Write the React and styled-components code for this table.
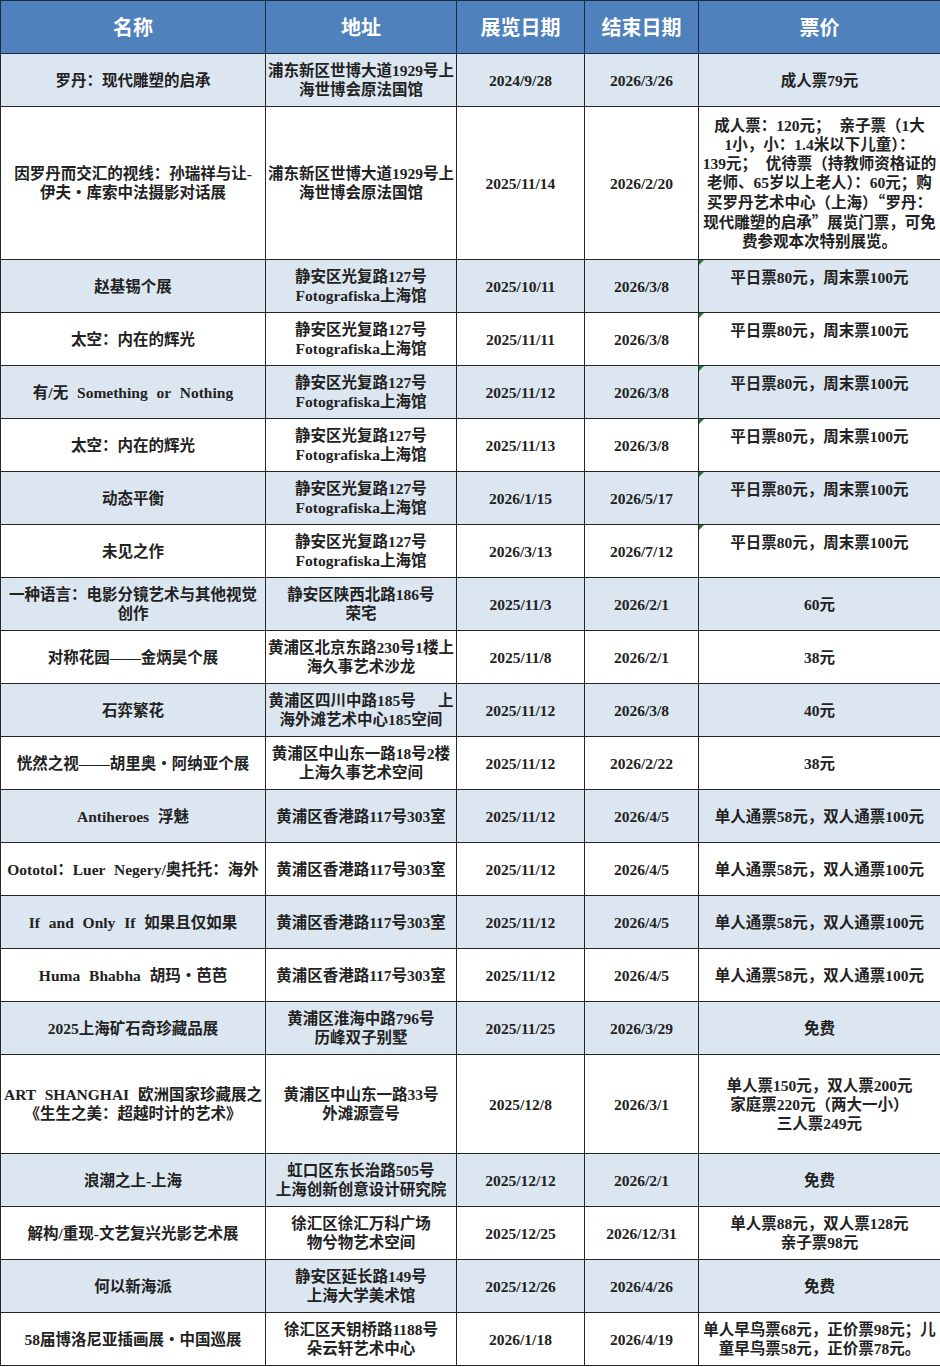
import React from "react";
import styled, { createGlobalStyle, css } from "styled-components";

const Global = createGlobalStyle`
  html, body { margin: 0; padding: 0; background: #ffffff; }
`;

const Table = styled.table`
  width: 940px;
  border-collapse: collapse;
  table-layout: fixed;
  font-family: "Liberation Serif", "Noto Sans CJK SC", serif;
`;

const HeadRow = styled.tr`
  height: 53px;
`;

const HeadCell = styled.th`
  padding: 0;
  background: #4f81bd;
  color: #ffffff;
  font-family: "Noto Sans CJK SC", sans-serif;
  font-weight: 700;
  font-size: 20px;
  line-height: 24px;
  border: 1px solid #1d2b40;
  text-align: center;
  vertical-align: middle;
`;

const Row = styled.tr`
  height: ${(p) => p.$h}px;
  background: ${(p) => (p.$shade ? "#dce6f1" : "#ffffff")};
`;

const Cell = styled.td`
  position: relative;
  padding: ${(p) => (p.$top ? "8px 1px 0" : "0 1px")};
  border: 1px solid #262626;
  text-align: center;
  vertical-align: ${(p) => (p.$top ? "top" : "middle")};
  font-size: 15.5px;
  line-height: 19px;
  font-weight: 700;
  color: #222222;
  word-spacing: 5px;
  white-space: nowrap;
  overflow: visible;
  ${(p) =>
    p.$flag &&
    css`
      &::before {
        content: "";
        position: absolute;
        left: 0;
        top: 0;
        border-top: 5px solid #1e7b34;
        border-right: 5px solid transparent;
      }
    `}
`;

const Line = styled.span`
  display: block;
`;

const Gap = styled.span`
  display: inline-block;
  width: 22px;
`;

const Wide = styled.span`
  font-family: "Noto Sans CJK SC", sans-serif;
`;

const Col = styled.col`
  width: ${(p) => p.$w}px;
`;

const addr127 = ["静安区光复路127号", "Fotografiska上海馆"];
const hk = ["黄浦区香港路117号303室"];
const weekday = ["平日票80元，周末票100元"];
const dual = ["单人通票58元，双人通票100元"];

const rows = [
  { name: ["罗丹：现代雕塑的启承"], addr: ["浦东新区世博大道1929号上", "海世博会原法国馆"], s: "2024/9/28", e: "2026/3/26", price: ["成人票79元"] },
  {
    h: 153,
    name: ["因罗丹而交汇的视线：孙瑞祥与让-", "伊夫・库索中法摄影对话展"],
    addr: ["浦东新区世博大道1929号上", "海世博会原法国馆"],
    s: "2025/11/14",
    e: "2026/2/20",
    price: [
      "成人票：120元；  亲子票（1大",
      "1小，小：1.4米以下儿童）：",
      "139元；  优待票（持教师资格证的",
      "老师、65岁以上老人）：60元；购",
      <>
        买罗丹艺术中心（上海）<Wide>“</Wide>罗丹：
      </>,
      <>
        现代雕塑的启承<Wide>”</Wide>展览门票，可免
      </>,
      "费参观本次特别展览。",
    ],
  },
  { name: ["赵基锡个展"], addr: addr127, s: "2025/10/11", e: "2026/3/8", price: weekday, top: true },
  { name: ["太空：内在的辉光"], addr: addr127, s: "2025/11/11", e: "2026/3/8", price: weekday, top: true },
  { name: ["有/无 Something or Nothing"], addr: addr127, s: "2025/11/12", e: "2026/3/8", price: weekday, top: true },
  { name: ["太空：内在的辉光"], addr: addr127, s: "2025/11/13", e: "2026/3/8", price: weekday, top: true },
  { name: ["动态平衡"], addr: addr127, s: "2026/1/15", e: "2026/5/17", price: weekday, top: true },
  { name: ["未见之作"], addr: addr127, s: "2026/3/13", e: "2026/7/12", price: weekday, top: true },
  { name: ["一种语言：电影分镜艺术与其他视觉", "创作"], addr: ["静安区陕西北路186号", "荣宅"], s: "2025/11/3", e: "2026/2/1", price: ["60元"] },
  { name: ["对称花园——金炳昊个展"], addr: ["黄浦区北京东路230号1楼上", "海久事艺术沙龙"], s: "2025/11/8", e: "2026/2/1", price: ["38元"] },
  {
    name: ["石弈繁花"],
    addr: [
      <>
        黄浦区四川中路185号
        <Gap />上
      </>,
      "海外滩艺术中心185空间",
    ],
    s: "2025/11/12",
    e: "2026/3/8",
    price: ["40元"],
  },
  { name: ["恍然之视——胡里奥・阿纳亚个展"], addr: ["黄浦区中山东一路18号2楼", "上海久事艺术空间"], s: "2025/11/12", e: "2026/2/22", price: ["38元"] },
  { name: ["Antiheroes 浮魅"], addr: hk, s: "2025/11/12", e: "2026/4/5", price: dual },
  { name: ["Oototol：Luer Negery/奥托托：海外"], addr: hk, s: "2025/11/12", e: "2026/4/5", price: dual },
  { name: ["If and Only If 如果且仅如果"], addr: hk, s: "2025/11/12", e: "2026/4/5", price: dual },
  { name: ["Huma Bhabha 胡玛・芭芭"], addr: hk, s: "2025/11/12", e: "2026/4/5", price: dual },
  { name: ["2025上海矿石奇珍藏品展"], addr: ["黄浦区淮海中路796号", "历峰双子别墅"], s: "2025/11/25", e: "2026/3/29", price: ["免费"] },
  {
    h: 99,
    name: ["ART SHANGHAI 欧洲国家珍藏展之", "《生生之美：超越时计的艺术》"],
    addr: ["黄浦区中山东一路33号", "外滩源壹号"],
    s: "2025/12/8",
    e: "2026/3/1",
    price: ["单人票150元，双人票200元", "家庭票220元（两大一小）", "三人票249元"],
  },
  { name: ["浪潮之上-上海"], addr: ["虹口区东长治路505号", "上海创新创意设计研究院"], s: "2025/12/12", e: "2026/2/1", price: ["免费"] },
  { name: ["解构/重现-文艺复兴光影艺术展"], addr: ["徐汇区徐汇万科广场", "物兮物艺术空间"], s: "2025/12/25", e: "2026/12/31", price: ["单人票88元，双人票128元", "亲子票98元"] },
  { name: ["何以新海派"], addr: ["静安区延长路149号", "上海大学美术馆"], s: "2025/12/26", e: "2026/4/26", price: ["免费"] },
  { name: ["58届博洛尼亚插画展・中国巡展"], addr: ["徐汇区天钥桥路1188号", "朵云轩艺术中心"], s: "2026/1/18", e: "2026/4/19", price: ["单人早鸟票68元，正价票98元；儿", "童早鸟票58元，正价票78元。"] },
];

function Lines({ items }) {
  return items.map((t, i) => <Line key={i}>{t}</Line>);
}

export default function App() {
  return (
    <>
      <Global />
      <Table>
        <colgroup>
          <Col $w={265} />
          <Col $w={191} />
          <Col $w={128} />
          <Col $w={114} />
          <Col $w={242} />
        </colgroup>
        <thead>
          <HeadRow>
            <HeadCell>名称</HeadCell>
            <HeadCell>地址</HeadCell>
            <HeadCell>展览日期</HeadCell>
            <HeadCell>结束日期</HeadCell>
            <HeadCell>票价</HeadCell>
          </HeadRow>
        </thead>
        <tbody>
          {rows.map((r, i) => (
            <Row key={i} $h={r.h || 53} $shade={i % 2 === 0}>
              <Cell>
                <Lines items={r.name} />
              </Cell>
              <Cell>
                <Lines items={r.addr} />
              </Cell>
              <Cell>{r.s}</Cell>
              <Cell>{r.e}</Cell>
              <Cell $top={r.top} $flag={r.top}>
                <Lines items={r.price} />
              </Cell>
            </Row>
          ))}
        </tbody>
      </Table>
    </>
  );
}
